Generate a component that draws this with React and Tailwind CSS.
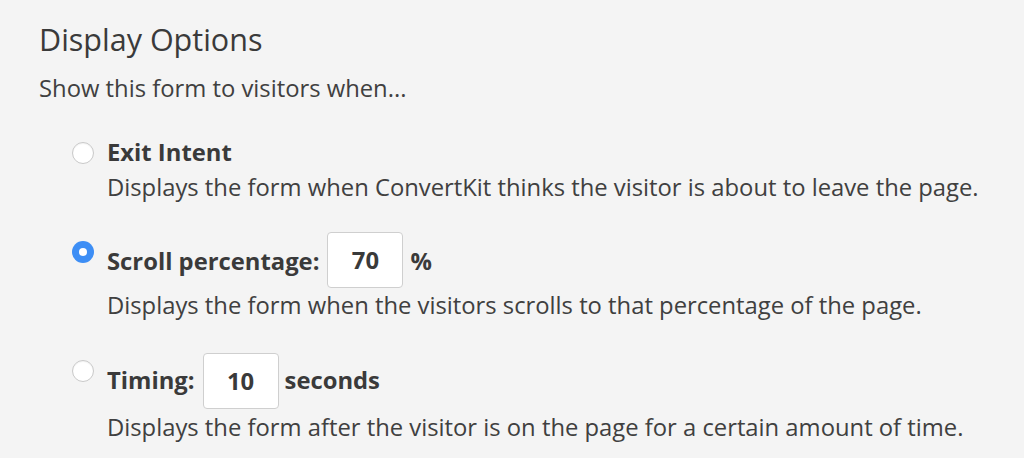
import React, { useState } from 'react';

const options = [
    {
        id: 'exit',
        description: 'Displays the form when ConvertKit thinks the visitor is about to leave the page.',
    },
    {
        id: 'scroll',
        description: 'Displays the form when the visitors scrolls to that percentage of the page.',
    },
    {
        id: 'timing',
        description: 'Displays the form after the visitor is on the page for a certain amount of time.',
    },
];

const Radio = ({ checked, onClick, className }) => (
    <button
        type="button"
        onClick={onClick}
        className={
            'flex h-[22px] w-[22px] shrink-0 items-center justify-center rounded-full ' +
            (checked
                ? 'bg-[#3d8ef5]'
                : 'border border-[#c9c9c9] bg-white shadow-[inset_0_1px_1px_rgba(0,0,0,0.05)]') +
            ' ' +
            className
        }
    >
        {checked && <span className="h-[8px] w-[8px] rounded-full bg-white" />}
    </button>
);

const NumberBox = ({ value, onChange }) => (
    <input
        type="text"
        value={value}
        onChange={(e) => onChange(e.target.value)}
        className="h-[56px] w-[76px] rounded-[4px] border border-[#cfcfcf] bg-white text-center text-[23.8px] font-bold text-[#3a3a3a] outline-none"
    />
);

export default function App() {
    const [selected, setSelected] = useState('scroll');
    const [percent, setPercent] = useState('70');
    const [seconds, setSeconds] = useState('10');

    return (
        <div className="min-h-[458px] w-full bg-[#f4f4f4] pl-[39px] pt-[19px] font-['Open_Sans',sans-serif] text-[#3a3a3a]">
            <h2 className="text-[30.5px] leading-[40px] font-normal">Display Options</h2>
            <p className="mt-[14px] text-[23.8px] leading-[30px] text-[#404040]">Show this form to visitors when...</p>

            <div className="ml-[33px]">
                {/* Exit intent */}
                <div className="mt-[34px] flex items-start gap-[13px]">
                    <Radio
                        checked={selected === 'exit'}
                        onClick={() => setSelected('exit')}
                        className="mt-[5px]"
                    />
                    <div>
                        <div className="text-[23.8px] leading-[30px] font-bold">Exit Intent</div>
                        <div className="mt-[5px] text-[23.8px] leading-[30px] text-[#404040]">{options[0].description}</div>
                    </div>
                </div>

                {/* Scroll percentage */}
                <div className="mt-[30px] flex items-start gap-[13px]">
                    <Radio
                        checked={selected === 'scroll'}
                        onClick={() => setSelected('scroll')}
                        className="mt-[9px]"
                    />
                    <div>
                        <div className="flex h-[56px] items-center text-[23.8px] font-bold">
                            <span className="mt-[4px]">Scroll percentage:</span>
                            <span className="ml-[8px]">
                                <NumberBox value={percent} onChange={setPercent} />
                            </span>
                            <span className="ml-[7px] mt-[4px]">%</span>
                        </div>
                        <div className="mt-[2px] text-[23.8px] leading-[30px] text-[#404040]">{options[1].description}</div>
                    </div>
                </div>

                {/* Timing */}
                <div className="mt-[33px] flex items-start gap-[13px]">
                    <Radio
                        checked={selected === 'timing'}
                        onClick={() => setSelected('timing')}
                        className="mt-[7px]"
                    />
                    <div>
                        <div className="flex h-[56px] items-center text-[23.8px] font-bold">
                            <span>Timing:</span>
                            <span className="ml-[8px]">
                                <NumberBox value={seconds} onChange={setSeconds} />
                            </span>
                            <span className="ml-[6px]">seconds</span>
                        </div>
                        <div className="mt-[3px] text-[23.8px] leading-[30px] text-[#404040]">{options[2].description}</div>
                    </div>
                </div>
            </div>
        </div>
    );
}
